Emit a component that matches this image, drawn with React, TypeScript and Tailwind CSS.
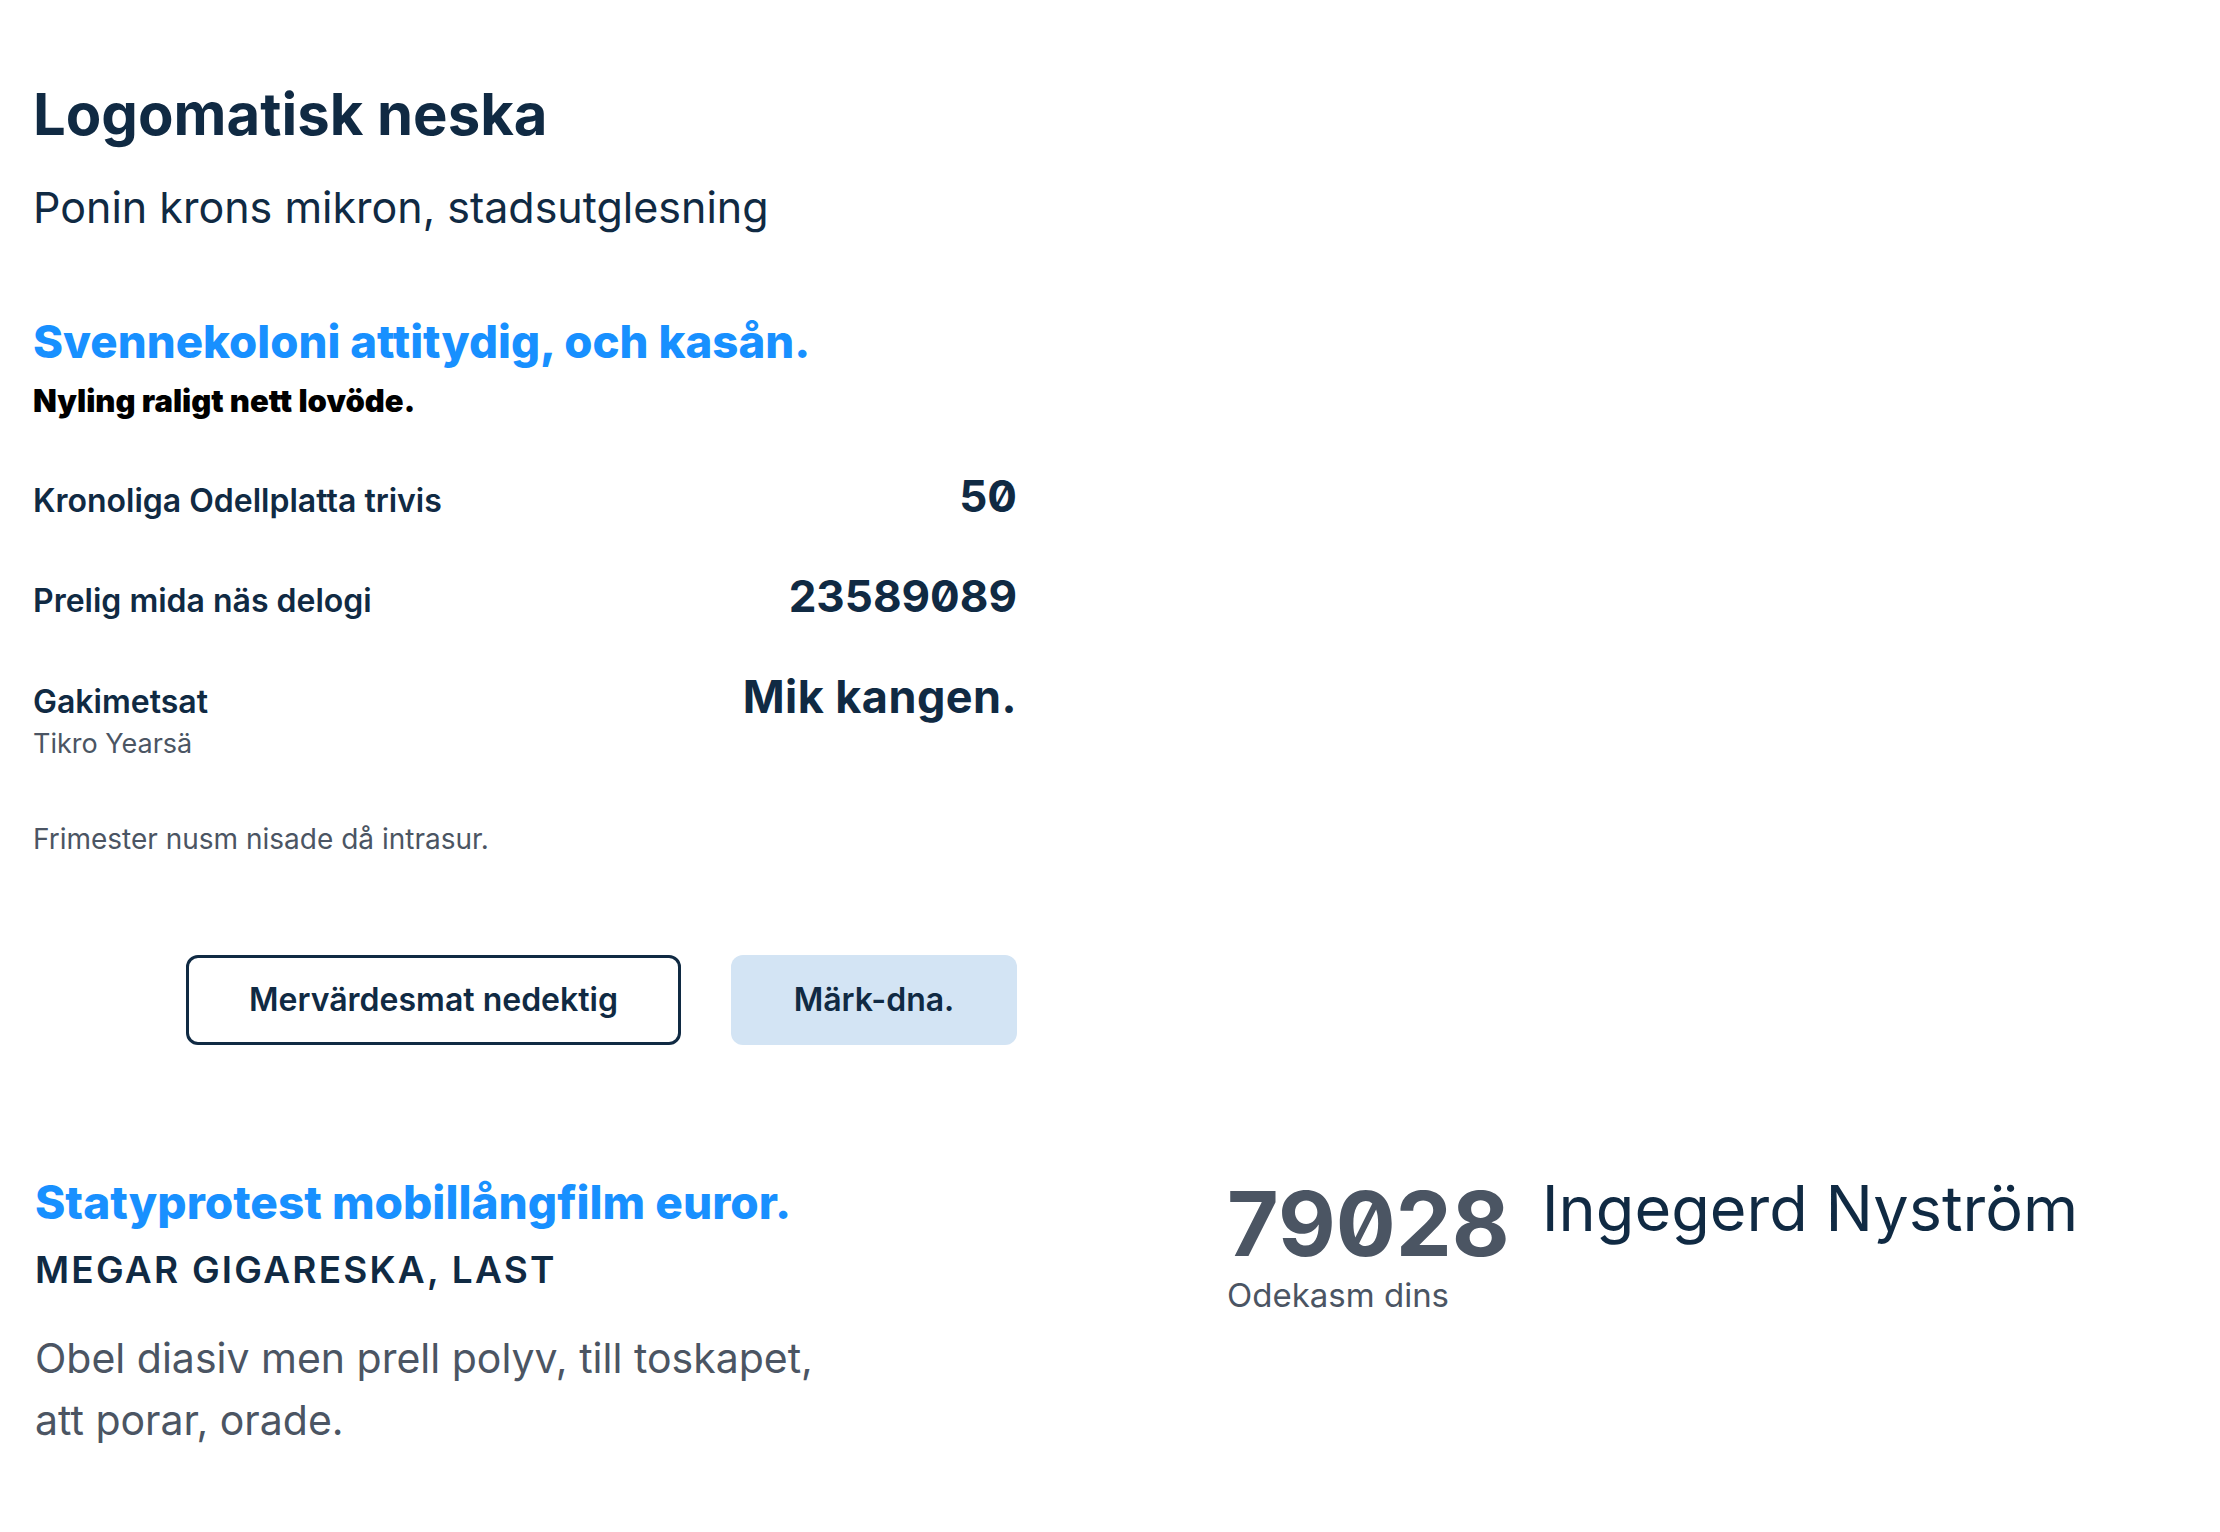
import React from 'react';

// Stat rows in the summary block
const rows = [
  { label: 'Kronoliga Odellplatta trivis', value: '50' },
  { label: 'Prelig mida näs delogi', value: '23589089' },
];

function StatRow({ label, sub, value, wide }: { label: string; sub?: string; value: string; wide?: boolean }) {
  return (
    <div className="flex items-baseline justify-between">
      <div className="flex flex-col">
        <span className="text-[32px] leading-[32px] font-semibold text-[#102a43]">{label}</span>
        {sub && <span className="mt-[12px] text-[27px] leading-[27px] text-[#4b5563]">{sub}</span>}
      </div>
      <span
        className={
          wide
            ? 'text-[45px] leading-[45px] font-bold tracking-[0.01em] text-[#102a43]'
            : 'text-[44px] leading-[45px] font-bold text-[#102a43] [font-feature-settings:"zero"]'
        }
      >
        {value}
      </span>
    </div>
  );
}

export default function App() {
  return (
    <div className="min-h-screen bg-white px-[33px] pt-[85px] pb-[80px] font-['Inter','Noto_Sans',sans-serif]">
      <div className="w-[984px]">
        <h1 className="text-[58px] leading-[58px] font-bold text-[#102a43]">Logomatisk neska</h1>
        <p className="mt-[43px] text-[43px] leading-[43px] text-[#102a43]">Ponin krons mikron, stadsutglesning</p>

        <h2 className="mt-[90px] text-[45.6px] leading-[45px] font-extrabold text-[#1890ff]">
          Svennekoloni attitydig, och kasån.
        </h2>
        <p className="mt-[22px] text-[31px] leading-[30px] font-black text-black">Nyling raligt nett lovöde.</p>

        <div className="mt-[58px] flex flex-col gap-[55px]">
          {rows.map((r) => (
            <StatRow key={r.label} label={r.label} value={r.value} />
          ))}
          <StatRow label="Gakimetsat" sub="Tikro Yearsä" value="Mik kangen." wide />
        </div>

        <p className="mt-[68px] text-[28px] leading-[28px] text-[#4b5563]">Frimester nusm nisade då intrasur.</p>

        <div className="mt-[102px] flex justify-end gap-[50px]">
          <button className="h-[90px] w-[495px] rounded-[12px] border-[3px] border-[#102a43] bg-white text-[32px] font-semibold text-[#102a43]">
            Mervärdesmat nedektig
          </button>
          <button className="h-[90px] w-[286px] rounded-[12px] bg-[#d3e4f4] text-[32px] font-semibold text-[#102a43]">
            Märk-dna.
          </button>
        </div>
      </div>

      <div className="mt-[131px] flex items-start">
        <div className="w-[1194px] pt-[3px] pl-[2px]">
          <h2 className="text-[46px] leading-[46px] font-extrabold text-[#1890ff]">Statyprotest mobillångfilm euror.</h2>
          <p className="mt-[26px] text-[37px] leading-[37px] font-semibold uppercase tracking-[0.06em] text-[#102a43]">
            Megar Gigareska, Last
          </p>
          <p className="mt-[39px] w-[820px] text-[41px] leading-[62px] text-[#4b5563]">
            Obel diasiv men prell polyv, till toskapet, att porar, orade.
          </p>
        </div>

        <div className="flex items-start gap-[32px]">
          <div className="mt-[3px] flex flex-col">
            <span className="text-[89px] leading-[89px] font-bold text-[#4b5563] [font-feature-settings:'zero']">79028</span>
            <span className="mt-[11px] text-[33px] leading-[33px] text-[#4b5563]">Odekasm dins</span>
          </div>
          <span className="mt-[1px] text-[63px] leading-[63px] text-[#102a43]">Ingegerd Nyström</span>
        </div>
      </div>
    </div>
  );
}
